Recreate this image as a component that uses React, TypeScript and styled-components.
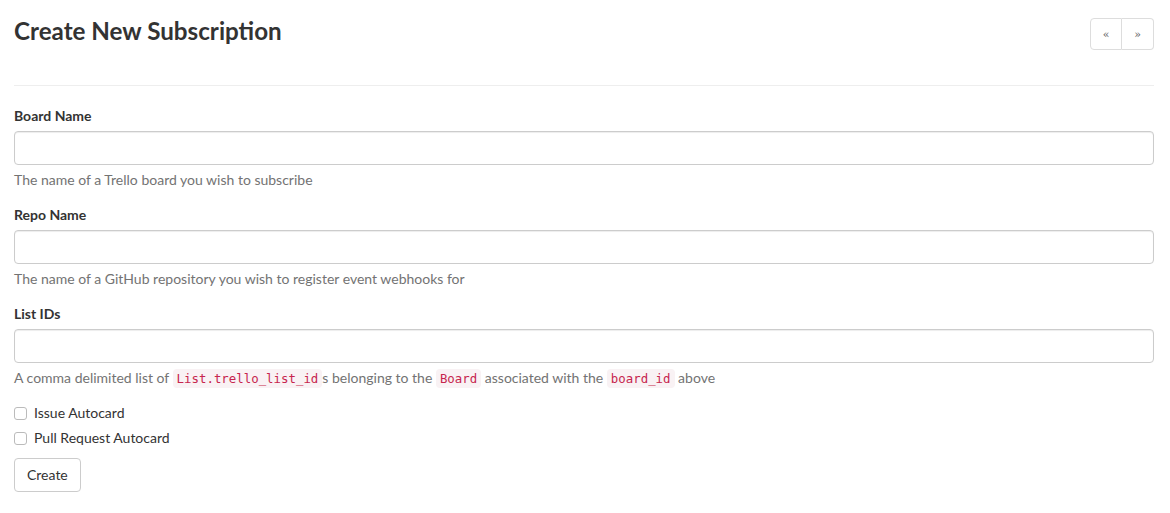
import React from "react";
import styled, { createGlobalStyle } from "styled-components";

const Global = createGlobalStyle`
  html, body { margin: 0; padding: 0; background: #fff; }
  body {
    font-family: Lato, "Open Sans", "Liberation Sans", sans-serif;
    font-size: 14px;
    line-height: 20px;
    color: #333;
  }
  * { box-sizing: border-box; }
`;

const Page = styled.div`
  width: 1140px;
  margin-left: 14px;
`;

const Header = styled.div`
  display: flex;
  justify-content: space-between;
  align-items: flex-start;
  height: 86px;
  padding-top: 18px;
  border-bottom: 1px solid #eee;
  margin-bottom: 20px;
`;

const Title = styled.h1`
  margin: 0;
  font-size: 24.2px;
  line-height: 26px;
  font-weight: 700;
  color: #333;
`;

const BtnGroup = styled.div`
  display: flex;
`;

const PagerBtn = styled.button<{ $first?: boolean }>`
  width: 32px;
  height: 32px;
  padding: 0;
  background: #fff;
  border: 1px solid #ddd;
  border-left-width: ${(p) => (p.$first ? "1px" : "0")};
  border-radius: ${(p) => (p.$first ? "4px 0 0 4px" : "0 4px 4px 0")};
  font-family: "DejaVu Serif", serif;
  font-size: 11px;
  color: #666;
  display: flex;
  align-items: center;
  justify-content: center;
`;

const FormGroup = styled.div`
  margin-bottom: 15px;
`;

const Label = styled.label`
  display: block;
  font-weight: 700;
  margin-bottom: 5px;
`;

const Input = styled.input`
  display: block;
  width: 100%;
  height: 34px;
  padding: 6px 12px;
  border: 1px solid #ccc;
  border-radius: 4px;
  box-shadow: inset 0 1px 1px rgba(0, 0, 0, 0.075);
  font: inherit;
  background: #fff;
`;

const Help = styled.p`
  margin: 5px 0 10px;
  color: #737373;
`;

const Code = styled.code`
  font-family: "DejaVu Sans Mono", "Liberation Mono", monospace;
  font-size: 12.4px;
  line-height: 1;
  padding: 2px 4px;
  color: #c7254e;
  background: #f9f2f4;
  border-radius: 4px;
`;

const Check = styled.div<{ $follow?: boolean }>`
  margin-top: ${(p) => (p.$follow ? "-5px" : "0")};
  margin-bottom: 10px;
`;

const CheckLabel = styled.label`
  display: flex;
  align-items: center;
  gap: 7px;
  cursor: pointer;
`;

const Box = styled.span`
  width: 13px;
  height: 13px;
  border: 1px solid #bbb;
  border-radius: 3px;
  background: #fff;
  display: inline-block;
`;

const Button = styled.button`
  height: 34px;
  padding: 6px 12px;
  font: inherit;
  color: #333;
  background: #fff;
  border: 1px solid #ccc;
  border-radius: 4px;
`;

export default function App() {
  return (
    <>
      <Global />
      <Page>
        <Header>
          <Title>Create New Subscription</Title>
          <BtnGroup>
            <PagerBtn $first>«</PagerBtn>
            <PagerBtn>»</PagerBtn>
          </BtnGroup>
        </Header>
        <form>
          <FormGroup>
            <Label>Board Name</Label>
            <Input type="text" />
            <Help>The name of a Trello board you wish to subscribe</Help>
          </FormGroup>
          <FormGroup>
            <Label>Repo Name</Label>
            <Input type="text" />
            <Help>The name of a GitHub repository you wish to register event webhooks for</Help>
          </FormGroup>
          <FormGroup>
            <Label>List IDs</Label>
            <Input type="text" />
            <Help>
              A comma delimited list of <Code>List.trello_list_id</Code>s belonging to the{" "}
              <Code>Board</Code> associated with the <Code>board_id</Code> above
            </Help>
          </FormGroup>
          <Check>
            <CheckLabel>
              <Box />
              Issue Autocard
            </CheckLabel>
          </Check>
          <Check $follow>
            <CheckLabel>
              <Box />
              Pull Request Autocard
            </CheckLabel>
          </Check>
          <Button type="button">Create</Button>
        </form>
      </Page>
    </>
  );
}
